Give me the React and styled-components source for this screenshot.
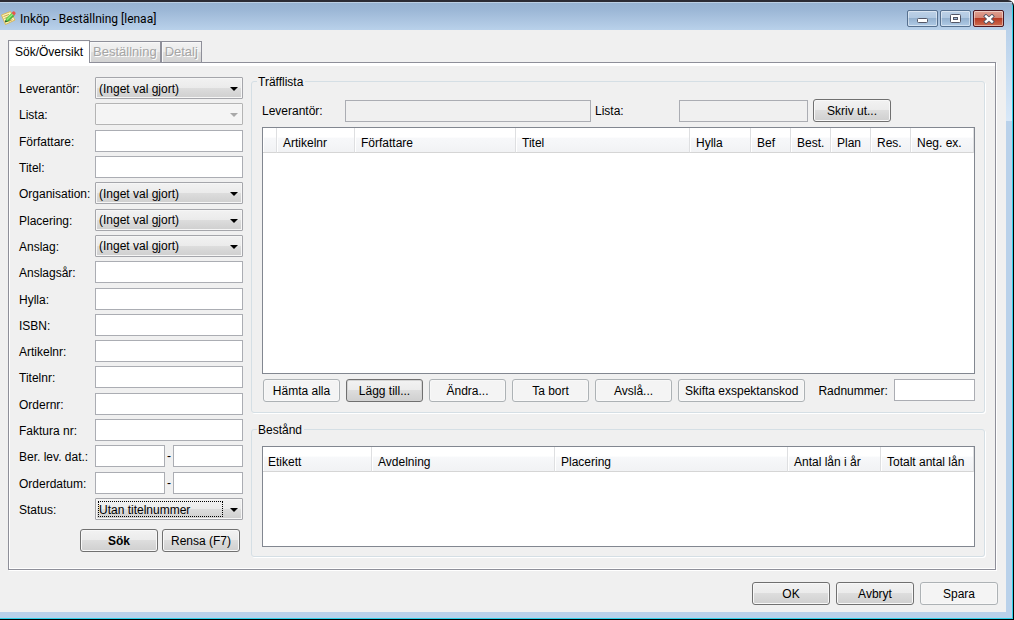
import React from 'react';
import styled, { createGlobalStyle, css } from 'styled-components';

const GlobalStyle = createGlobalStyle`
  *, *::before, *::after {
    box-sizing: border-box;
  }

  body {
    margin: 0;
    font: 12px/14px "Liberation Sans", Arial, sans-serif;
    color: #000;
  }

  input, select, button {
    font: inherit;
    color: inherit;
    margin: 0;
    outline: none;
  }
`;

const Window = styled.div`
  display: flex;
  flex-direction: column;
  min-height: 100vh;
  background: linear-gradient(#b9d1ea, #d8e8f8) right 28px / 7px 91px no-repeat, #b9d1ea;
  border-top: 2px solid #2b2b33;
  border-right: 1px solid #000;
  border-bottom: 1px solid #000;
  border-top-right-radius: 6px;
  box-shadow: inset -1px -1px 0 #2fd0e8;
  padding: 0 7px 7px 0;
`;

const TitleBar = styled.header`
  display: flex;
  align-items: center;
  gap: 4px;
  height: 28px;
  margin-right: -6px;
  padding: 0 8px 0 0;
  background: linear-gradient(#e0ebf6 0, #97b3d1 1px, #9cb7d6 8px, #b9d1ea 100%);
`;

const Title = styled.h1`
  flex: 1;
  margin: 0;
  padding-top: 6px;
  font: 12px/16px Roboto, "Open Sans", sans-serif;
`;

const AppIcon = styled.svg`
  margin-top: 3px;
`;

const Controls = styled.div`
  display: flex;
  gap: 2px;
  padding-top: 5px;
`;

const ControlButton = styled.button`
  display: grid;
  place-items: center;
  width: 31px;
  height: 17px;
  padding: 0;
  border: 1px solid ${props => (props.$close ? '#4d1620' : '#56708f')};
  border-radius: 2px;
  box-shadow: inset 0 0 0 1px rgba(255, 255, 255, .45);
  background: ${props =>
    props.$close
      ? 'linear-gradient(#e0a091 0, #d38271 48%, #b73a24 50%, #cd6d50 100%)'
      : 'linear-gradient(#bdd1e7 0, #b0c8e1 48%, #94b1cf 50%, #b0cbe6 100%)'};
`;

const Client = styled.main`
  flex: 1;
  display: flex;
  flex-direction: column;
  padding: 10px 8px 7px;
  background: #f0f0f0;
`;

const Tabs = styled.div`
  display: flex;
  align-items: flex-end;
`;

const Tab = styled.button`
  height: 21px;
  padding: 0 3px;
  border: 1px solid #8e8f99;
  border-bottom: 0;
  border-left-width: ${props => (props.$joined ? 0 : 1)}px;
  background: linear-gradient(#f2f2f2 0, #ebebeb 48%, #dedede 50%, #d2d2d2 100%);
  box-shadow: inset 1px 1px 0 #f8f8f8;

  &:disabled {
    font-size: 13px;
    color: #a5a5a5;
    text-shadow: 1px 1px 0 #fff;
  }

  ${props => props.$active && css`
    height: 23px;
    padding: 0 6px;
    margin-bottom: -1px;
    z-index: 1;
    background: #fff;
  `}
`;

const Panel = styled.section`
  flex: 1;
  display: flex;
  gap: 8px;
  margin-right: 2px;
  padding: 10px 10px 12px 10px;
  border: 1px solid #8e8f99;
  box-shadow: inset 0 3px 0 #fff, inset 1px -1px 0 #fff, 1px 1px 0 #fff;
`;

const SearchForm = styled.form`
  display: flex;
  flex-direction: column;
  width: 224px;
  padding: 4px 0 5px;
`;

const FieldList = styled.div`
  flex: 1;
  display: flex;
  flex-direction: column;
  justify-content: space-between;
`;

const FieldRow = styled.div`
  display: grid;
  grid-template-columns: 76px 1fr;
  align-items: center;
`;

const Label = styled.label`
  white-space: nowrap;
  padding-top: 2px;
`;

const TextInput = styled.input`
  width: 100%;
  min-width: 0;
  height: 22px;
  padding: 0 3px;
  border: 1px solid #abadb3;
  border-radius: 0;
  background: #fff;

  &:read-only {
    background: #f0f0f0;
  }
`;

const DateRange = styled.div`
  display: grid;
  grid-template-columns: 1fr 8px 1fr;
  align-items: center;
  text-align: center;
`;

const SelectBox = styled.div`
  position: relative;

  &::after {
    content: '';
    position: absolute;
    right: 5px;
    top: 10px;
    border: 4px solid transparent;
    border-top-color: ${props => (props.$disabled ? '#a8a8a8' : '#000')};
    border-bottom: 0;
    pointer-events: none;
  }

  ${props => props.$focused && css`
    &::before {
      content: '';
      position: absolute;
      inset: 3px 20px 3px 3px;
      border: 1px dotted #000;
      pointer-events: none;
    }
  `}
`;

const Select = styled.select`
  display: block;
  appearance: none;
  width: 100%;
  height: 22px;
  padding: 1px 20px 0 3px;
  border: 1px solid #a5a6ab;
  border-radius: 1px;
  background: linear-gradient(#f2f2f2 0, #ebebeb 48%, #dddddd 50%, #cfcfcf 100%);
  box-shadow: inset 0 0 0 1px #f6f6f6;

  &:disabled {
    opacity: 1;
    border-color: #b4b4b4;
    background: #f4f4f4;
  }
`;

const Button = styled.button`
  min-width: 78px;
  height: 23px;
  padding: 0 4px;
  border: 1px solid #707070;
  border-radius: 3px;
  background: linear-gradient(#f2f2f2 0, #ebebeb 48%, #dddddd 50%, #cfcfcf 100%);
  box-shadow: inset 0 0 0 1px #f8f8f8;
  font-weight: ${props => (props.$bold ? 'bold' : 'normal')};
  white-space: nowrap;

  ${props => props.$flat && css`
    border-color: #adb2b5;
    background: #f4f4f4;
  `}

  ${props => props.$pressed && css`
    box-shadow: inset 0 0 0 1px #d4d4d4;
  `}
`;

const FormButtons = styled.div`
  display: flex;
  justify-content: flex-end;
  gap: 4px;
  padding: 9px 3px 0 0;
`;

const Results = styled.div`
  flex: 1;
  display: flex;
  flex-direction: column;
  gap: 8px;
  min-width: 0;
`;

const Group = styled.fieldset`
  flex: ${props => (props.$grow ? '1' : 'none')};
  display: flex;
  flex-direction: column;
  gap: 5px;
  min-width: 0;
  margin: 0;
  padding: ${props => props.$pad};
  border: 1px solid #d5dfe5;
  border-radius: 3px;
  box-shadow: 1px 1px 0 #fff;
`;

const Legend = styled.legend`
  margin-left: -5px;
  padding: 2px 2px 0 1px;
`;

const ListBar = styled.div`
  display: grid;
  grid-template-columns: 83px 246fr 88px 129fr 82px 85px;
  align-items: center;

  ${Label} {
    padding-top: 0;
  }
`;

const ListLabel = styled(Label)`
  padding-left: 4px;
`;

const PrintButton = styled(Button)`
  margin-left: 5px;
`;

const TableBox = styled.div`
  flex: 1;
  min-height: 101px;
  border: 1px solid #828790;
  background: #fff;
`;

const Table = styled.table`
  width: 100%;
  table-layout: fixed;
  border-collapse: separate;
  border-spacing: 0;
`;

const Th = styled.th`
  height: 25px;
  padding: 6px 0 0 5px;
  border-right: 1px solid #dedfe1;
  border-bottom: 1px solid #d5d5d5;
  background: linear-gradient(#fff 0, #fff 38%, #f7f8fa 42%, #f1f2f4 100%);
  box-shadow: inset 1px 0 0 #fff;
  font-weight: normal;
  text-align: left;
  white-space: nowrap;

  & + & {
    padding-left: 6px;
  }
`;

const ActionBar = styled.div`
  display: flex;
  align-items: flex-start;
  gap: 6px;
  padding-left: 1px;

  ${Button} {
    min-width: 77px;
    padding: 0 6px;
  }

  ${Label} {
    margin-left: 7px;
    padding-top: 5px;
  }

  ${TextInput} {
    flex: 1;
  }
`;

const DialogButtons = styled.footer`
  display: flex;
  justify-content: flex-end;
  gap: 6px;
  padding-top: 12px;
`;

const hitColumns = [
  ['', 14],
  ['Artikelnr', 78],
  ['Författare', 161],
  ['Titel'],
  ['Hylla', 61],
  ['Bef', 40],
  ['Best.', 40],
  ['Plan', 40],
  ['Res.', 40],
  ['Neg. ex.', 63],
];

const stockColumns = [
  ['Etikett', 109],
  ['Avdelning', 183],
  ['Placering'],
  ['Antal lån i år', 93],
  ['Totalt antal lån', 93],
];

const fields = [
  { id: 'leverantor', label: 'Leverantör:', value: '(Inget val gjort)' },
  { id: 'lista', label: 'Lista:', value: '', disabled: true },
  { id: 'forfattare', label: 'Författare:' },
  { id: 'titel', label: 'Titel:' },
  { id: 'organisation', label: 'Organisation:', value: '(Inget val gjort)' },
  { id: 'placering', label: 'Placering:', value: '(Inget val gjort)' },
  { id: 'anslag', label: 'Anslag:', value: '(Inget val gjort)' },
  { id: 'anslagsar', label: 'Anslagsår:' },
  { id: 'hylla', label: 'Hylla:' },
  { id: 'isbn', label: 'ISBN:' },
  { id: 'artikelnr', label: 'Artikelnr:' },
  { id: 'titelnr', label: 'Titelnr:' },
  { id: 'ordernr', label: 'Ordernr:' },
  { id: 'fakturanr', label: 'Faktura nr:' },
  { id: 'levdatum', label: 'Ber. lev. dat.:', range: true },
  { id: 'orderdatum', label: 'Orderdatum:', range: true },
  { id: 'status', label: 'Status:', value: 'Utan titelnummer', focused: true },
];

const FieldControl = ({ field }) => {
  if (field.range) {
    return (
      <DateRange>
        <TextInput id={field.id} />
        <span>-</span>
        <TextInput aria-label={`${field.label} till`} />
      </DateRange>
    );
  }
  if (field.value !== undefined) {
    return (
      <SelectBox $disabled={field.disabled} $focused={field.focused}>
        <Select id={field.id} disabled={field.disabled}>
          <option>{field.value}</option>
        </Select>
      </SelectBox>
    );
  }
  return <TextInput id={field.id} />;
};

const HeaderTable = ({ columns }) => (
  <TableBox>
    <Table>
      <colgroup>
        {columns.map(([name, width]) => <col key={name} width={width} />)}
      </colgroup>
      <thead>
        <tr>
          {columns.map(([name]) => <Th key={name} scope="col">{name}</Th>)}
        </tr>
      </thead>
      <tbody />
    </Table>
  </TableBox>
);

const NoteIcon = () => (
  <AppIcon width="16" height="16" viewBox="0 0 16 16" aria-hidden="true">
    <path d="M1.500 5 L10.500 1.500 L15 10 L5.500 14.500 Z" fill="#fbf6b4" stroke="#d9b65a" />
    <path d="M3.500 6.500 L9 4.500 M4.500 8.500 L8 7 M8.500 11.500 L12.500 9.500" stroke="#c9a24c" />
    <path d="M5 12 L6 8.500 L11.500 3 L14 5.500 L8.500 11 Z" fill="#5fd04c" />
    <path d="M7 9.500 L12.800 4" stroke="#b5f29a" />
    <path d="M5 12 L8.500 11 L14 5.500" fill="none" stroke="#2b8a2c" />
    <path d="M5 12 L5.600 10 L7 11.400 Z" fill="#333" />
    <path d="M11.500 3 L13 1.500 Q14 1 15 2 Q16 3 15.500 4 L14 5.500 Z" fill="#e4574b" />
  </AppIcon>
);

const App = () => (
  <Window>
    <GlobalStyle />
    <TitleBar>
      <NoteIcon />
      <Title>Inköp - Beställning [lenaa]</Title>
      <Controls>
        <ControlButton aria-label="Minimera">
          <svg width="12" height="9" viewBox="0 0 12 9">
            <rect x="0.500" y="4.500" width="10" height="4" rx="1" fill="#fff" stroke="#535666" />
          </svg>
        </ControlButton>
        <ControlButton aria-label="Maximera">
          <svg width="12" height="9" viewBox="0 0 12 9">
            <rect x="0.500" y=".5" width="10" height="8" rx="1" fill="#fff" stroke="#535666" />
            <rect x="3.500" y="3.500" width="4" height="2" fill="#9db8d6" stroke="#535666" />
          </svg>
        </ControlButton>
        <ControlButton $close aria-label="Stäng">
          <svg width="12" height="10" viewBox="0 0 12 10">
            <path d="M1.500 1 L10.500 9 M10.500 1 L1.500 9" stroke="#535666" strokeWidth="4" />
            <path d="M2.200 1.600 L9.800 8.400 M9.800 1.600 L2.200 8.400" stroke="#fff" strokeWidth="2.400" />
          </svg>
        </ControlButton>
      </Controls>
    </TitleBar>
    <Client>
      <Tabs role="tablist">
        <Tab role="tab" aria-selected="true" $active>Sök/Översikt</Tab>
        <Tab role="tab" disabled $joined>Beställning</Tab>
        <Tab role="tab" disabled>Detalj</Tab>
      </Tabs>
      <Panel>
        <SearchForm onSubmit={e => e.preventDefault()}>
          <FieldList>
            {fields.map(field => (
              <FieldRow key={field.id}>
                <Label htmlFor={field.id}>{field.label}</Label>
                <FieldControl field={field} />
              </FieldRow>
            ))}
          </FieldList>
          <FormButtons>
            <Button type="submit" $bold>Sök</Button>
            <Button type="reset">Rensa (F7)</Button>
          </FormButtons>
        </SearchForm>
        <Results>
          <Group $grow $pad="10px 9px 10px 10px">
            <Legend>Träfflista</Legend>
            <ListBar>
              <Label htmlFor="hit-leverantor">Leverantör:</Label>
              <TextInput id="hit-leverantor" readOnly />
              <ListLabel htmlFor="hit-lista">Lista:</ListLabel>
              <TextInput id="hit-lista" readOnly />
              <PrintButton type="button">Skriv ut...</PrintButton>
            </ListBar>
            <HeaderTable columns={hitColumns} />
            <ActionBar>
              <Button type="button" $flat>Hämta alla</Button>
              <Button type="button" $pressed>Lägg till...</Button>
              <Button type="button" $flat>Ändra...</Button>
              <Button type="button" $flat>Ta bort</Button>
              <Button type="button" $flat>Avslå...</Button>
              <Button type="button" $flat>Skifta exspektanskod</Button>
              <Label htmlFor="radnummer">Radnummer:</Label>
              <TextInput id="radnummer" />
            </ActionBar>
          </Group>
          <Group $pad="9px 9px 9px 10px">
            <Legend>Bestånd</Legend>
            <HeaderTable columns={stockColumns} />
          </Group>
        </Results>
      </Panel>
      <DialogButtons>
        <Button type="button">OK</Button>
        <Button type="button">Avbryt</Button>
        <Button type="button" $flat>Spara</Button>
      </DialogButtons>
    </Client>
  </Window>
);

export default App;
